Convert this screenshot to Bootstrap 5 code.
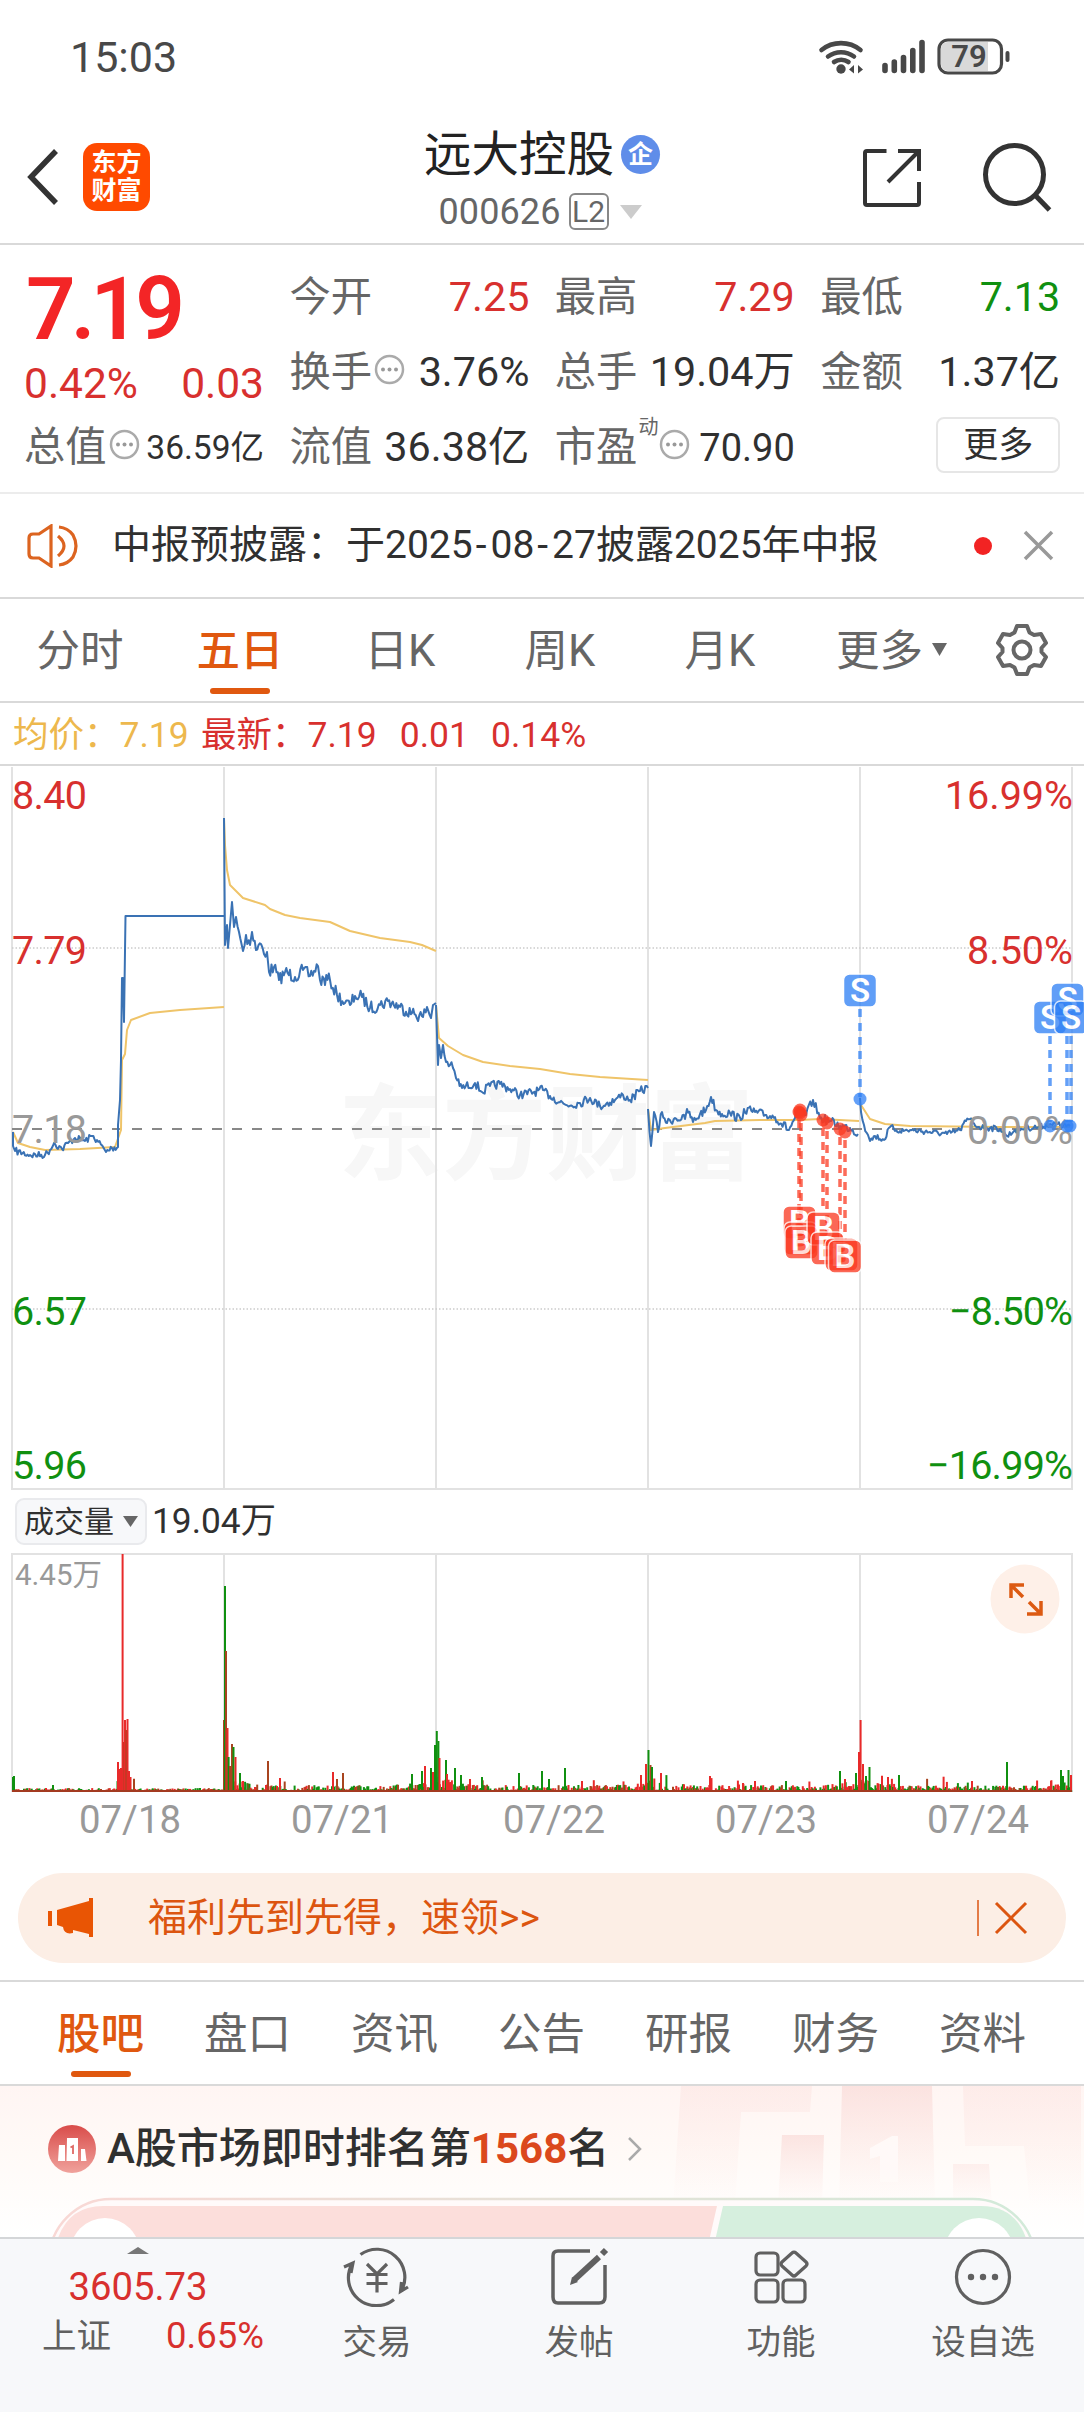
<!DOCTYPE html>
<html lang="zh-CN">
<head>
<meta charset="utf-8">
<meta name="viewport" content="width=device-width, initial-scale=1">
<title>远大控股 000626</title>
<link href="https://cdn.jsdelivr.net/npm/bootstrap@5.3.0/dist/css/bootstrap.min.css" rel="stylesheet">
<style>
:root{--up:#d8302e;--down:#109010;--accent:#e0580f;--ink:#303030;--dim:#666}
body{font-family:Roboto,"Noto Sans CJK SC",sans-serif;color:var(--ink);background:#fff;width:1084px;height:2412px;overflow:hidden;line-height:1}
svg{display:block;flex:none}
.up{color:var(--up)}.down{color:var(--down)}.dim{color:var(--dim)}.accent{color:var(--accent)}
.rule{border-bottom:2px solid #d9d9d9}
.statusbar{height:116px;padding:0 72px 2px 70px;color:#484848}
.clock{font-size:43px}
.topbar{height:129px;padding:0 32px 5px 26px}
.side{width:260px}
.applogo{width:67px;height:68px;border-radius:14px;background:#ff4a00;color:#fff;font-weight:700;font-size:25px;line-height:28px;margin-left:25px}
.names{padding:5px 0 0 6px}
.stock{font-size:47.5px;line-height:52px;color:#222}
.ent{width:39px;height:39px;border-radius:50%;background:#5f8de9;color:#fff;font-size:25px;font-weight:700;margin-left:7px}
.code{font-size:36px;line-height:38px;margin-top:12px;letter-spacing:.1px;margin-left:-4px}
.lv{width:40px;height:37px;border:2px solid #888;border-radius:6px;font-size:30px;margin:0 11px 0 8px}
.quote{height:249px;padding:15px 24px 0;border-bottom:2px solid #ececec;display:grid;grid-template-columns:repeat(4,240px);column-gap:25.4px;grid-template-rows:repeat(3,75px);font-size:41.3px}
.quote>div{display:flex;align-items:center;justify-content:space-between;white-space:nowrap;line-height:1}
.price{font-size:87px;font-weight:600;color:#f32526;letter-spacing:-5px}
.price span{position:relative;top:12px;left:2px}
.chg{padding-top:23px;font-size:42.5px}
.more{width:124px;height:56px;border:2px solid #e6e6e6;border-radius:8px;font-size:35px;margin:-5px 0 0 auto}
.notice{height:105px;padding:0 30px 0 27px;font-size:39px}
.hy{letter-spacing:4px;margin-left:3px}
.dotred{width:18px;height:18px;border-radius:50%;background:#f22323}
.ktabs{height:104px;font-size:43.5px;color:var(--dim)}
.ktabs>div{width:160px;height:100%;padding-top:3px}
.seg{position:relative;display:flex;align-items:center;justify-content:center}
.seg.on{color:var(--accent);font-weight:500}
.seg.on:after{content:"";position:absolute;width:60px;height:6px;border-radius:3px;background:var(--accent);left:50%;margin-left:-30px;bottom:7px}
.legend{height:63px;padding:4px 13px 0;font-size:35.5px;white-space:pre}
.chart text{font-family:Roboto,"Noto Sans CJK SC",sans-serif}
.volhead{height:63px;padding:0 0 0 15px;font-size:35.3px}
.pick{width:132px;height:47px;border:2px solid #e9eaed;border-radius:9px;background:#f7f8fa;font-size:30px;margin-right:5px}
.dates{height:81px;padding:8px 0 0 24px;font-size:38.3px;color:#999}
.dates>div{width:212px;text-align:center;padding-top:1px}
.promo{margin:0 18px 17px;height:90px;border-radius:45px;background:#fceee5;padding:0 38px 0 29px;font-size:39px;color:#dc5510}
.btabs{height:106px;border-top:2px solid #d9d9d9;padding:3px 27px 0;font-size:43.5px;color:var(--dim)}
.btabs .seg{width:147px}
.rank{height:151px;position:relative;overflow:hidden;background:linear-gradient(#fff5f3,#fffaf7 45%,#fff)}
.rank-title{position:relative;height:128px;padding:0 0 3px 48px;font-size:42px;font-weight:500}
.rank-title b{color:#db481c}
.decor{position:absolute;left:0;top:0}
.tabbar{height:177px;border-top:2px solid #d4d6d8;background:#f7f8fa;color:#606060;font-size:34.5px}
.idx{width:276px;padding-top:8px}
.idxv{font-size:38.3px;line-height:40px;margin-top:13px}
.idxrow{padding:0 12px 0 42px;margin-top:10px;line-height:38px}
.act{width:202px;padding-top:8px}
.act svg{margin-bottom:15px}
.act span{line-height:40px}
</style>
<script src="https://cdn.jsdelivr.net/npm/bootstrap@5.3.0/dist/js/bootstrap.bundle.min.js"></script>
</head>
<body>
<div class="statusbar d-flex align-items-center justify-content-between">
  <span class="clock">15:03</span>
  <svg width="194" height="40" viewBox="818 36 194 40" fill="none" stroke="#484848" stroke-linecap="round">
    <g stroke-width="4.600"><path d="M821.500 49a31 31 0 0 1 39 0M828 55.500a22 22 0 0 1 26 0M834 61a13 13 0 0 1 14.500 0"/></g>
    <circle cx="841" cy="68" r="4.700" fill="#484848" stroke="none"/>
    <path d="M849 68.500l5-4.500v8.500zM863 68.500l-5-4.500v8.500z" fill="#484848" stroke="none"/>
    <path d="M885 64.500v5M894.300 61v8.500M903.500 56.500v13M912.800 49.500v20M922 41.500v28" stroke-width="5.600"/>
    <rect x="939" y="39" width="62.500" height="33" rx="9" stroke-width="3.200"/>
    <path d="M948 41h40v29h-40q-7 0-7-7v-15q0-7 7-7z" fill="#d9d9d9" stroke="none"/>
    <path d="M1007.500 52v7" stroke-width="4"/>
    <text x="969" y="66" text-anchor="middle" font-size="31" font-weight="600" font-family="Roboto" fill="#484848" stroke="none">79</text>
  </svg>
</div>
<header class="topbar rule d-flex align-items-center justify-content-between">
  <div class="side d-flex align-items-center">
    <svg width="32" height="58" viewBox="0 0 32 58"><path d="M30 3L5 29l25 26" fill="none" stroke="#333" stroke-width="5.500"/></svg>
    <div class="applogo d-flex align-items-center justify-content-center text-center">东方<br>财富</div>
  </div>
  <div class="names d-flex flex-column align-items-center">
    <div class="stock d-flex align-items-center">远大控股<span class="ent d-flex align-items-center justify-content-center">企</span></div>
    <div class="code dim d-flex align-items-center">000626<span class="lv d-flex align-items-center justify-content-center">L2</span><svg width="22" height="14"><path d="M0 0h22L11 14z" fill="#ccc"/></svg></div>
  </div>
  <div class="side d-flex align-items-center justify-content-end">
    <svg width="59" height="59" viewBox="0 0 59 59" fill="none" stroke="#333" stroke-width="4" style="margin-right:61px"><path d="M24.500 3H5Q3 3 3 5v50q0 2 2 2h50q2 0 2-2V34M36 3h21v20M56 4L26 34"/></svg>
    <svg width="70" height="70" viewBox="0 0 70 70" fill="none" stroke="#333" stroke-width="5"><circle cx="32.500" cy="32.500" r="29"/><path d="M53 53l14.500 15"/></svg>
  </div>
</header>
<section class="quote">
  <div class="price"><span>7.19</span></div>
  <div><span class="dim">今开</span><span class="up">7.25</span></div>
  <div><span class="dim">最高</span><span class="up">7.29</span></div>
  <div><span class="dim">最低</span><span class="down">7.13</span></div>
  <div class="up chg"><span>0.42%</span><span>0.03</span></div>
  <div><span class="dim d-flex align-items-center">换手<svg width="31" height="31" style="margin:-5px 0 0 2px"><use href="#tip"/></svg></span><span>3.76%</span></div>
  <div><span class="dim">总手</span><span>19.04万</span></div>
  <div><span class="dim">金额</span><span>1.37亿</span></div>
  <div><span class="dim d-flex align-items-center">总值<svg width="31" height="31" style="margin:-5px 0 0 2px"><use href="#tip"/></svg></span><span style="font-size:33.500px">36.59亿</span></div>
  <div><span class="dim">流值</span><span>36.38亿</span></div>
  <div><span class="dim d-flex align-items-center">市盈<sup style="font-size:20px;top:-20px;margin-left:1px">动</sup><svg width="31" height="31" style="margin:-5px 0 0 1px"><use href="#tip"/></svg></span><span style="font-size:38px">70.90</span></div>
  <div><span class="more d-flex align-items-center justify-content-center">更多</span></div>
</section>
<section class="notice rule d-flex align-items-center">
  <svg width="53" height="44" viewBox="0 0 53 44" fill="none" stroke="#dc6420" stroke-width="3.200"><path d="M24 2v40L12 34H6q-4 0-4-4V14q0-4 4-4h6zM31 12q12 10 0 20M32 3q9 1 14 8q6 11 0 22q-5 7-14 8"/></svg>
  <span style="margin-left:32px;white-space:nowrap">中报预披露：于2025<span class="hy">-</span>08<span class="hy">-</span>27披露2025年中报</span>
  <span class="dotred ms-auto"></span>
  <svg width="31" height="31" style="margin-left:31px"><path d="M2 2l27 27M29 2L2 29" stroke="#999" stroke-width="3.500"/></svg>
</section>
<nav class="ktabs rule d-flex align-items-center">
  <div class="seg">分时</div><div class="seg on">五日</div><div class="seg">日K</div><div class="seg">周K</div><div class="seg">月K</div>
  <div class="d-flex align-items-center justify-content-center" style="width:183px">更多<svg width="15" height="13" style="margin:-4px 0 0 9px"><path d="M0 0h15L7.500 13z" fill="#666"/></svg></div>
  <svg width="54" height="54" viewBox="-27 -27 54 54" fill="none" stroke="#666" stroke-width="4" stroke-linejoin="round" style="margin-left:12px"><path d="M-5-24H5L7.500-17.500L12-15L19-16L24-7L19.500-2V2L24 7L19 16L12 15L7.500 17.500L5 24H-5L-7.500 17.500L-12 15L-19 16L-24 7L-19.500 2V-2L-24-7L-19-16L-12-15L-7.500-17.500Z"/><circle r="8.500"/></svg>
</nav>
<div class="legend rule d-flex align-items-center"><span style="color:#edb84d;width:188px">均价：7.19</span><span class="up">最新：7.19</span><span class="up" style="margin-left:23px">0.01</span><span class="up" style="margin-left:22px">0.14%</span></div>
<svg class="chart" id="priceChart" width="1084" height="724" viewBox="0 766 1084 724">
  <text x="338" y="1172" font-size="104" font-weight="700" fill="#f7f7f7">东方财富</text>
  <g stroke="#e2e2e2" stroke-width="2"><path d="M12 767V1490M224 767V1490M436 767V1490M648 767V1490M860 767V1490M1072 767V1490M12 1489H1072" fill="none"/></g>
  <path d="M12 948H1072M12 1309H1072" stroke="#ccc" stroke-width="1.500" stroke-dasharray="1.500 2"/>
  <path d="M12 1129H1072" stroke="#888" stroke-width="2" stroke-dasharray="10 10"/>
  <g id="lines" fill="none" stroke-width="2" stroke-linejoin="round"></g>
  <g font-size="39.500">
    <g fill="#d8302e"><text x="12" y="809" textLength="75">8.40</text><text x="12" y="964" textLength="75">7.79</text><text x="1073" y="809" text-anchor="end">16.99%</text><text x="1073" y="964" text-anchor="end">8.50%</text></g>
    <g fill="#999"><text x="12" y="1143" textLength="75">7.18</text><text x="1073" y="1144" text-anchor="end">0.00%</text></g>
    <g fill="#109010"><text x="12" y="1325" textLength="75">6.57</text><text x="12" y="1479" textLength="75">5.96</text><text x="1073" y="1325" text-anchor="end" textLength="124">−8.50%</text><text x="1073" y="1479" text-anchor="end" textLength="146">−16.99%</text></g>
  </g>
  <g id="marks"></g>
</svg>
<div class="volhead d-flex align-items-center"><span class="pick d-flex align-items-center justify-content-center">成交量<svg width="15" height="11" style="margin-left:9px"><path d="M0 0h15L7.500 11z" fill="#666"/></svg></span>19.04万</div>
<svg class="chart" width="1084" height="239" viewBox="0 1553 1084 239">
  <path d="M12 1554H1072M12 1553V1792M224 1553V1792M436 1553V1792M648 1553V1792M860 1553V1792M1072 1553V1792" stroke="#e2e2e2" stroke-width="2" fill="none"/>
  <g id="vols" stroke-width="2"></g>
  <path d="M12 1791H1072" stroke="#a33a20" stroke-width="2"/>
  <text x="15" y="1585" font-size="29.500" fill="#999">4.45万</text>
  <circle cx="1025" cy="1599" r="34.500" fill="#fef0e8"/>
  <path d="M1011 1598V1585H1024M1012 1586L1023 1597M1041 1601V1614H1027M1040 1613L1029 1602" fill="none" stroke="#dc5a12" stroke-width="3.500"/>
</svg>
<div class="dates d-flex"><div>07/18</div><div>07/21</div><div>07/22</div><div>07/23</div><div>07/24</div></div>
<div class="promo d-flex align-items-center">
  <svg width="47" height="40" viewBox="0 0 47 40" fill="#e95504"><path d="M1 13h4v15H1zM10 12L42 3V0h4v39h-4v-3l-16-4v3q-9 2-10-6l-6-2z"/></svg>
  <span style="margin-left:54px">福利先到先得，速领&gt;&gt;</span>
  <svg class="ms-auto" width="52" height="38" viewBox="0 0 52 38" stroke="#dc5510" fill="none"><path d="M2 1v36" stroke-width="1.500"/><path d="M20 4l30 30M50 4L20 34" stroke-width="3"/></svg>
</div>
<nav class="btabs rule d-flex"><div class="seg on">股吧</div><div class="seg">盘口</div><div class="seg">资讯</div><div class="seg">公告</div><div class="seg">研报</div><div class="seg">财务</div><div class="seg">资料</div></nav>
<section class="rank">
  <svg class="decor" width="1084" height="151" viewBox="0 2085 1084 151">
    <defs>
      <linearGradient id="fade" x1="0" y1="0" x2="0" y2="1"><stop offset="0" stop-color="#fbdcd9" stop-opacity=".38"/><stop offset="1" stop-color="#fbdcd9" stop-opacity="0"/></linearGradient>
      <linearGradient id="fade2" x1="0" y1="0" x2="0" y2="1"><stop offset="0" stop-color="#f8d3d0" stop-opacity=".55"/><stop offset="1" stop-color="#fbdcd9" stop-opacity="0"/></linearGradient>
      <linearGradient id="rim"><stop offset="0" stop-color="#f9d8d5"/><stop offset="1" stop-color="#d2ead9"/></linearGradient>
    </defs>
    <path d="M681 2085H812L810 2111H741L735 2205H673ZM963 2085H1081V2205H1030L1024 2145H965Z" fill="url(#fade)"/>
    <path d="M782 2134H824L822 2205H778ZM953 2163H989L992 2205H953Z" fill="url(#fade2)"/>
    <path d="M842 2085H932L935 2205H839Z" fill="url(#fade2)"/>
    <path d="M898 2135V2181H880V2155L870 2158V2147L892 2135Z" fill="#fffaf8" opacity=".9"/>
    <rect x="49" y="2198" width="986" height="130" rx="62" fill="#fffafa" stroke="url(#rim)" stroke-width="2.500"/>
    <path d="M717 2205H103Q68 2205 57 2240H709Z" fill="#fcdedb"/>
    <path d="M723 2205H981Q1016 2205 1027 2240H715Z" fill="#d6efde"/>
    <circle cx="105" cy="2252" r="35" fill="#fff"/><circle cx="979" cy="2252" r="35" fill="#fff"/>
    <text x="179" y="2267" font-size="36" font-weight="500" fill="#db481c">看涨</text>
    <text x="867" y="2267" font-size="36" font-weight="500" fill="#2f9b50">看跌</text>
  </svg>
  <div class="rank-title d-flex align-items-center">
    <svg width="48" height="48" viewBox="0 0 48 48" class="me-2"><defs><linearGradient id="rg" x1="0" y1="0" x2="0" y2="1"><stop stop-color="#d94c4a"/><stop offset="1" stop-color="#f0a29c"/></linearGradient></defs><circle cx="24" cy="24" r="24" fill="url(#rg)"/><path d="M11 20h6v16h-7zM19 13h11v23H18.500zM33 24h4l1.500 12H33z" fill="#fff"/><path d="M22.500 22.500l2.500-1.500V29" fill="none" stroke="#df6965" stroke-width="1.800"/></svg>
    <span style="margin-left:3px;white-space:nowrap">A股市场即时排名第<b>1568</b>名</span>
    <svg width="16" height="26" style="margin-left:18px"><path d="M2 2l11 11L2 24" fill="none" stroke="#aaa" stroke-width="2.500"/></svg>
  </div>
</section>
<footer class="tabbar d-flex">
  <div class="idx d-flex flex-column align-items-center">
    <svg width="22" height="7"><path d="M0 7h22L11 0z" fill="#777"/></svg>
    <div class="idxv up">3605.73</div>
    <div class="idxrow d-flex justify-content-between w-100"><span>上证</span><span class="up" style="font-size:36.500px">0.65%</span></div>
  </div>
  <div class="act d-flex flex-column align-items-center">
    <svg width="68" height="60" viewBox="-34 -30 68 60" fill="none" stroke="#606060" stroke-width="3.200"><path d="M-16.500-22.500A28 28 0 0 1 24.500 13.500M31 10L23.500 14.500L24.500 5M17 22.500A28 28 0 0 1-25-13M-33-10L-24-14L-26-4M-10-13L0-3L10-13M0-3V15.500M-10.500-2.500H10.500M-10.500 6.500H10.500"/></svg><span>交易</span>
  </div>
  <div class="act d-flex flex-column align-items-center">
    <svg width="60" height="60" viewBox="0 0 60 60" fill="none" stroke="#606060" stroke-width="3.500"><path d="M41 4H9Q4 4 4 9V50Q4 56 9 56H50Q56 56 56 50V18"/><path d="M25 33L50 10" stroke-width="6"/><path d="M53 7L57 3" stroke-width="6"/><path d="M21 38l2-8 6 5z" fill="#606060" stroke="none"/></svg><span>发帖</span>
  </div>
  <div class="act d-flex flex-column align-items-center">
    <svg width="60" height="60" viewBox="0 0 60 60" fill="none" stroke="#606060" stroke-width="3.200"><rect x="5" y="6" width="22" height="22" rx="4"/><rect x="5" y="33" width="22" height="22" rx="4"/><rect x="32" y="33" width="22" height="22" rx="4"/><path d="M41 6q2-2 4 0l10 9q2 2 0 4l-10 9q-2 2-4 0l-10-9q-2-2 0-4z"/></svg><span>功能</span>
  </div>
  <div class="act d-flex flex-column align-items-center">
    <svg width="60" height="60" viewBox="0 0 60 60"><circle cx="30" cy="30" r="26.500" fill="none" stroke="#606060" stroke-width="3.200"/><g fill="#606060"><circle cx="18" cy="30" r="3.200"/><circle cx="30" cy="30" r="3.200"/><circle cx="42" cy="30" r="3.200"/></g></svg><span>设自选</span>
  </div>
</footer>
<svg width="0" height="0" class="position-absolute"><symbol id="tip" viewBox="0 0 31 31"><circle cx="15.500" cy="15.500" r="13.500" fill="none" stroke="#aaa" stroke-width="2.500"/><g fill="#999"><circle cx="9" cy="15.500" r="2"/><circle cx="15.500" cy="15.500" r="2"/><circle cx="22" cy="15.500" r="2"/></g></symbol></svg>
<script>
let seed=7;const rnd=()=>(seed=(seed*16807)%2147483647)/2147483647;
// intraday price, one string per trading day
const price=[
"13,1132 13,1146 15,1151 30,1155 45,1155 50,1150 54,1143 62,1149 68,1143 75,1138 85,1141 92,1136 97,1140 106,1152 112,1148 118,1147 118,1125 120,1100 121,1060 122,978 123,978 124,1022 124,1022 125.5,916 224,916",
"224,818 225,945 227,925 228,948 230,925 232,902 234,927 236,917 239,932 243,951 246,935 250,945 252,932 256,950 261,944 264,954 267,952 269,972 274,967 279,980 285,972 295,977 303,970 310,976 318,966 320,980 330,980 337,995 345,1003 350,1005 355,996 362,997 370,1008 380,1005 388,1001 400,1007 412,1013 423,1017 427,1007 431,1018 433,1005 436,1003",
"436,1005 438,1065 439,1045 441,1058 443,1045 446,1062 450,1065 453,1068 456,1078 462,1088 475,1083 482,1092 490,1086 500,1084 510,1089 520,1095 543,1090 550,1096 566,1105 580,1103 590,1098 600,1106 615,1100 623,1095 630,1100 640,1091 648,1088",
"648,1109 651,1146 654,1112 658,1132 662,1112 667,1123 675,1118 685,1119 687,1109 693,1122 700,1114 706,1110 711,1097 716,1110 722,1114 730,1113 741,1120 744,1109 755,1112 765,1115 775,1117 789,1130 795,1118 800,1110 806,1115 813,1100 820,1118 830,1121 840,1126 850,1128 858,1134",
"860,1098 861,1112 864,1125 868,1135 870,1141 875,1136 884,1140 890,1127 900,1131 910,1130 930,1132 947,1134 960,1130 966,1121 970,1119 978,1127 990,1128 1000,1129 1007,1136 1015,1130 1025,1128 1040,1127 1050,1124 1070,1126"];
const avg=[
"13,1132 18,1143 30,1147 45,1150 80,1149 115,1147 121,1130 122,1060 125,1054 127,1030 131,1020 150,1013 180,1010 224,1007",
"224,818 225,845 227,870 230,885 243,898 265,905 270,909 285,915 300,918 330,922 350,931 380,938 410,942 422,945 436,951",
"436,1005 439,1038 448,1046 463,1055 483,1062 510,1066 540,1069 570,1074 600,1077 648,1080",
"648,1109 651,1130 665,1128 705,1123 715,1121 760,1120 800,1120 820,1119 859,1121",
"861,1105 870,1119 885,1124 910,1126 1000,1127 1070,1127"];
const parse=s=>s.split(" ").map(p=>p.split(",").map(Number));
let h="";
avg.forEach(s=>h+=`<polyline points="${s}" stroke="#efc469"/>`);
price.forEach((s,d)=>{const p=parse(s),o=[p[0]];const amp=[7,13,9,9,6][d];
 for(let i=1;i<p.length;i++){const[a,b]=p[i-1],[x,y]=p[i];const n=(x-a>60)?1:Math.floor((x-a)/1.2);
  for(let k=1;k<n;k++)o.push([a+(x-a)*k/n,b+(y-b)*k/n+(rnd()-.5)*amp]);o.push([x,y]);}
 h+=`<polyline points="${o.map(q=>q.map(v=>v.toFixed(1)).join()).join(" ")}" stroke="#3a72b4"/>`});
document.getElementById("lines").innerHTML=h;
// trade markers
const S="#2f80f5",B="#fb3a22";let m="";
const dash=(x,a,b,c)=>m+=`<path d="M${x} ${a}V${b}" stroke="${c}" stroke-width="3.5" stroke-dasharray="8 6" opacity=".75"/>`;
const dot=(x,y,c)=>m+=`<circle cx="${x}" cy="${y}" r="6.5" fill="${c}" opacity=".75"/>`;
const tag=(x,y,t,c)=>m+=`<g opacity=".76"><rect x="${x}" y="${y}" width="33" height="33" rx="6" fill="${c}" stroke="#fff" stroke-width="1.5"/><text x="${x+16.5}" y="${y+28}" text-anchor="middle" font-size="33" font-weight="600" fill="#fff">${t}</text></g>`;
dash(860,1009,1097,S);dot(860,1099,S);
[1050,1067,1071].forEach(x=>{dash(x,1036,1122,S);dot(Math.min(x,1070),1126,S)});
[[799,1112,1225],[801,1115,1226],[823,1120,1212],[827,1123,1232],[840,1129,1238],[845,1132,1240]].forEach(([x,a,b])=>{dash(x,a+8,b,B);dot(x,a,B)});
dot(800,1110,B);dot(800,1113,B);
tag(843.5,974,"S",S);tag(1033.5,1001,"S",S);tag(1051,983,"S",S);tag(1054.5,1001,"S",S);
tag(783,1206,"B",B);tag(784,1222,"B",B);tag(785,1226,"B",B);tag(807,1212,"B",B);tag(811,1232,"B",B);tag(825,1238,"B",B);tag(828.5,1240,"B",B);
document.getElementById("marks").innerHTML=m;
// volume: minute noise, then the named peaks as x,height,colour
const R="#e82a2a",G="#109010",D="#a8441f";let v="";
const bar=(x,t,c)=>v+=`<path d="M${x.toFixed(1)} 1792v${-t.toFixed(1)}" stroke="${c}"/>`;
for(let x=13;x<1072;x+=1.1){const d=Math.floor((x-12)/212),u=(x-12-212*d),q=212-u;
 const amp=d==0?(Math.abs(x-126)<9?14:2.5):d==4?5+10*Math.exp(-u/15)+10*Math.exp(-q/9):5.5+16*Math.exp(-u/14)+(d<4?9:0)*Math.exp(-q/14);
 let t=1.5+amp*Math.pow(rnd(),1.5);if(d&&rnd()>.965)t+=5+rnd()*5;
 bar(x,t,rnd()<.4?G:rnd()<.7?R:D);}
"13,15,G 14,16,G 53,7,G 118,30,R 119.5,23,R 121,24,R 124,50,D 125,72,R 126.5,62,D 127.5,73,R 129,21,R 130.5,15,R 122.6,238,R 224,72,D 225,206,G 226,141,D 227.5,64,R 228.6,35,G 230,26,D 232,48,D 233.5,45,G 235.5,35,R 240,19,G 243,11,R 268,31,D 280,14,R 333,20,R 337,13,D 343,19,D 412,18,G 422,21,G 425,26,R 431,24,G 433,20,R 435,47,G 436.8,61,G 438.4,51,G 439.5,34,R 446,32,G 447,18,R 455,24,G 461,17,G 470,13,R 482,15,G 519,19,G 542,21,G 549,13,G 565,24,G 582,11,R 641,17,R 646,28,R 648.5,42,G 650.5,27,D 652,25,G 661,19,R 710,16,R 743,9,R 755,11,R 786,11,G 840,21,G 845,13,R 856,19,G 859,40,R 860.6,72,R 863,28,R 866,16,G 869.5,25,G 888,15,R 899,17,G 972,11,R 1007,30,G 1051,11,R 1061,22,G 1063,16,G 1068.5,22,G 1071,17,R".split(" ").forEach(s=>{const[a,b,c]=s.split(",");bar(+a,+b,{R,G,D}[c])});
document.getElementById("vols").innerHTML=v;
</script>
</body>
</html>
